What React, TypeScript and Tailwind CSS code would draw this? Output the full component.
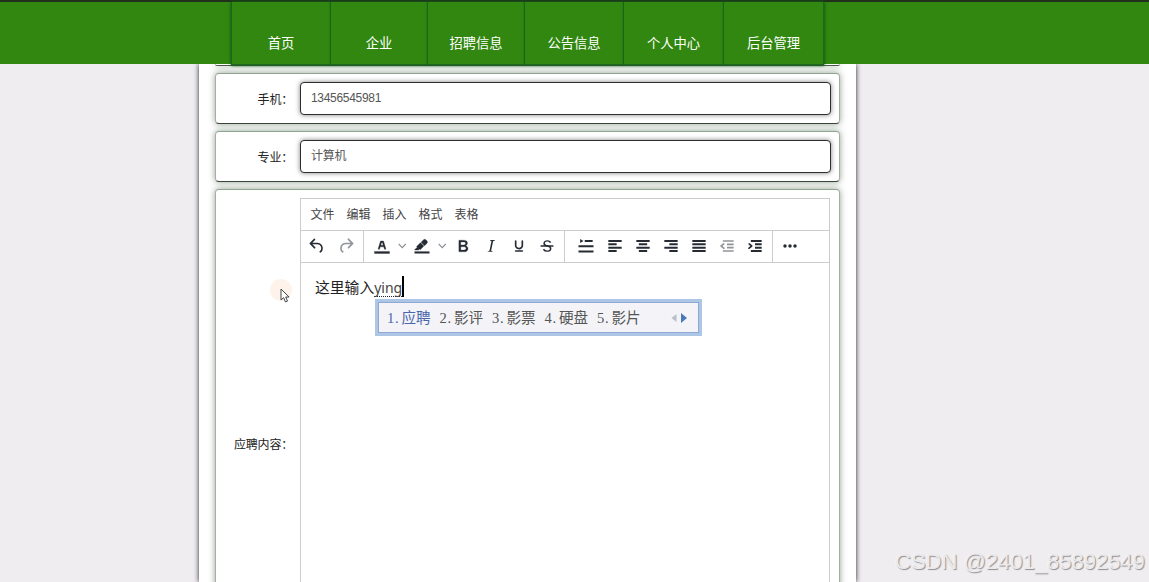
import type { ReactNode } from "react";

const NAV = [
  { label: "首页", width: "w-[99px]" },
  { label: "企业", width: "w-[97px]" },
  { label: "招聘信息", width: "w-[97px]" },
  { label: "公告信息", width: "w-[99px]" },
  { label: "个人中心", width: "w-[100px]" },
  { label: "后台管理", width: "w-[100px]" },
];

const MENUS = ["文件", "编辑", "插入", "格式", "表格"];
const CANDIDATES = ["应聘", "影评", "影票", "硬盘", "影片"];

export default function App() {
  return (
    <div className="relative flex h-[582px] w-[1149px] flex-col overflow-hidden bg-[#efedf0] font-['Liberation_Sans','Noto_Sans_CJK_SC',sans-serif] text-[#333]">
      <header className="z-10 flex h-16 shrink-0 border-t-2 border-[#20301a] bg-[#31870f] pl-[231px]">
        <nav className="flex h-[63px] border-l border-[#1c6d1c] shadow-[0_0_3px_#145c18]">
          {NAV.map((item) => (
            <a
              key={item.label}
              className={`${item.width} flex items-center justify-center border-r border-b border-[#1c6a1b] bg-[#31870f] pt-[21px] text-[13.3px] leading-5 text-white shadow-[0_0_3px_#145c18]`}
            >
              {item.label}
            </a>
          ))}
        </nav>
      </header>

      <main className="ml-[199px] flex h-[518px] w-[657px] shrink-0 flex-col gap-[7px] bg-white px-4 shadow-[0_0_5px_#222]">
        <div className="h-[2px] shrink-0 rounded-b border-b border-[#4b5b4b] bg-white shadow-[0_0_6px_#23482390]" />
        <Card className="h-[51px]">
          <Field label="手机：" value="13456545981" />
        </Card>
        <Card className="h-[51px]">
          <Field label="专业：" value="计算机" />
        </Card>
        <Card className="h-[520px] shrink-0">
          <Label className="pb-[11px]">应聘内容：</Label>
          <Editor />
        </Card>
      </main>

      <Pointer />
      <div className="absolute top-[550px] left-[895px] text-[22px] leading-6 whitespace-nowrap text-[#ebe9ec] [text-shadow:1px_1px_1px_#8f8f8f,-0.5px_-0.5px_0_#fff]">
        CSDN @2401_85892549
      </div>
    </div>
  );
}

function Card({ className, children }: { className: string; children: ReactNode }) {
  return (
    <section
      className={`${className} flex shrink-0 items-center rounded border border-x-[#aaa] border-t-[#93a393] border-b-[#3d443d] bg-white shadow-[0_0_6px_#23482380]`}
    >
      {children}
    </section>
  );
}

function Label({ className, children }: { className?: string; children: ReactNode }) {
  return (
    <span
      className={`w-[77px] pl-[5px] text-right font-['Noto_Sans_CJK_SC',sans-serif] text-xs tracking-[-0.2px] text-[#222] ${className ?? ""}`}
    >
      {children}
    </span>
  );
}

function Field({ label, value }: { label: string; value: string }) {
  return (
    <>
      <Label>{label}</Label>
      <div className="mb-px ml-[7px] flex h-[33px] w-[531px] items-center rounded border border-[#2b2f31] bg-white px-[10px] text-xs tracking-[-0.3px] text-[#555] shadow-[0_0_5px_#00000080]">
        {value}
      </div>
    </>
  );
}

function Editor() {
  return (
    <div className="mt-4 ml-[7px] flex h-full w-[530px] flex-col border border-[#ccc] bg-white">
      <div className="flex h-8 shrink-0 items-center gap-3 border-b border-[#ccc] pt-px pl-[9.5px] text-xs text-[#444]">
        {MENUS.map((menu) => (
          <span key={menu}>{menu}</span>
        ))}
      </div>
      <Toolbar />
      <div className="relative flex pt-[13px] pl-[14px] text-[15px] leading-6 whitespace-nowrap text-[#222]">
        <span className="text-[14.8px]">这里输入</span>
        <span className="h-[21px] border-r-2 border-black">
          <span className="block h-[21px] w-[28px] border-b border-dotted border-[#223] font-['Noto_Sans',sans-serif] text-[14px] leading-6 text-[#444]">
            ying
          </span>
        </span>
        <CandidateBox />
      </div>
    </div>
  );
}

function CandidateBox() {
  return (
    <div className="absolute top-[36px] left-[74px] flex h-[37px] w-[327px] items-center border-[3px] border-[#aec6e6] bg-[#f4f4f8] pl-[9px] font-['Liberation_Serif','Noto_Sans_CJK_SC',serif] text-[14.6px] leading-5 text-[#555] ring-1 ring-[#8eaad2] ring-inset">
      {CANDIDATES.map((word, i) => (
        <span
          key={word}
          className={i === 0 ? "flex w-[52.5px] shrink-0 text-[#4a67ac]" : "flex w-[52.5px] shrink-0"}
        >
          <span className="w-2">{i + 1}</span>
          <span className="w-[6.5px]">.</span>
          <span>{word}</span>
        </span>
      ))}
      <svg viewBox="0 0 16 10" className="ml-[21px] h-[10px] w-4">
        <path d="M5.5 1v8L.5 5z" fill="#b9bfc8" />
        <path d="M10 0v10l6-5z" fill="#4c78b8" />
      </svg>
    </div>
  );
}

function Toolbar() {
  return (
    <div className="flex h-8 shrink-0 border-b border-[#ccc] text-[#262b33]">
      <div className="flex w-[63px] items-center gap-px border-r border-[#ccc] pb-px pl-[2px]">
        <Icon>
          <path d="M6.4 8H12c3.7 0 6.2 2 6.8 5.1.6 2.7-.4 5.6-2.3 6.8a1 1 0 0 1-1-1.8c1.1-.6 1.8-2.7 1.4-4.6-.5-2.1-2.1-3.5-4.9-3.5H6.4l3.3 3.3a1 1 0 1 1-1.4 1.4l-5-5a1 1 0 0 1 0-1.4l5-5a1 1 0 0 1 1.4 1.4L6.4 8Z" />
        </Icon>
        <Icon dim>
          <path d="M17.6 10H12c-2.8 0-4.4 1.4-4.9 3.5-.4 2 .3 4 1.4 4.6a1 1 0 1 1-1 1.8c-2-1.2-2.9-4.1-2.3-6.8.6-3 3-5.1 6.8-5.1h5.6l-3.3-3.3a1 1 0 1 1 1.4-1.4l5 5a1 1 0 0 1 0 1.4l-5 5a1 1 0 0 1-1.4-1.4l3.3-3.3Z" />
        </Icon>
      </div>
      <div className="flex w-[201px] items-center border-r border-[#ccc] pb-px pl-[3.5px]">
        <Icon>
          <path d="M3 18.5h18V21H3zM8.7 16h-.8a.5.5 0 0 1-.5-.6l2.7-9c.1-.3.3-.4.5-.4h2.8c.2 0 .4.1.5.4l2.7 9a.5.5 0 0 1-.5.6h-.8a.5.5 0 0 1-.4-.4l-.7-2.2c0-.3-.3-.4-.5-.4h-3.4c-.2 0-.4.1-.5.4l-.7 2.2c0 .3-.2.4-.4.4Zm2.6-7.6-.6 2a.5.5 0 0 0 .5.6h1.6a.5.5 0 0 0 .5-.6l-.6-2c0-.3-.3-.4-.5-.4h-.4c-.2 0-.4.1-.5.4Z" stroke="currentColor" strokeWidth=".4" />
        </Icon>
        <Chevron />
        <Icon>
          <path d="M3 18.5h18V21H3z" />
          <path d="M7.7 16.7H3l3.3-3.3-.7-.8L10.2 8l4 4.1-4 4.2c-.2.2-.6.2-.8 0l-.6-.7-1.1 1.1zm5-7.5L11 7.4l3-2.9a2 2 0 0 1 2.6 0L18 6c.7.7.7 2 0 2.7l-2.9 2.9-1.8-1.8-.5-.6" stroke="currentColor" strokeWidth=".5" />
        </Icon>
        <Chevron />
        <Icon>
          <path d="M7.8 19c-.3 0-.5 0-.6-.2l-.2-.5V5.7c0-.2 0-.4.2-.5l.6-.2h5c1.5 0 2.7.3 3.5 1 .7.6 1.1 1.4 1.1 2.5a3 3 0 0 1-.6 1.9c-.4.6-1 1-1.6 1.2.4.1.9.3 1.3.6s.8.7 1 1.2c.4.4.5 1 .5 1.6 0 1.3-.4 2.3-1.3 3-.8.7-2.1 1-3.8 1H7.8Zm5-8.3c.6 0 1.2-.1 1.6-.5.4-.3.6-.7.6-1.3 0-1.1-.8-1.7-2.3-1.7H9.3v3.5h3.4Zm.5 6c.7 0 1.3-.1 1.7-.4.4-.4.6-.9.6-1.5s-.2-1-.7-1.4c-.4-.3-1-.4-2-.4H9.4v3.8h4Z" stroke="currentColor" strokeWidth=".3" />
        </Icon>
        <Icon>
          <path d="m16.7 4.7-.1.9h-.3c-.6 0-1 0-1.4.3-.3.3-.4.6-.5 1.1l-2.1 9.8v.6c0 .5.4.8 1.4.8h.2l-.2.8H8l.2-.8h.2c1.1 0 1.8-.5 2-1.5l2-9.8.1-.5c0-.6-.4-.8-1.4-.8h-.3l.2-.9h5.8Z" />
        </Icon>
        <Icon>
          <path d="M16 5c.6 0 1 .4 1 1v5.5a4 4 0 0 1-.4 1.8l-1 1.4a5.3 5.3 0 0 1-5.5 1 5 5 0 0 1-1.6-1c-.5-.4-.8-.9-1.1-1.4a4 4 0 0 1-.4-1.8V6c0-.6.4-1 1-1s1 .4 1 1v5.5c0 .3 0 .6.2 1l.6.7a3.3 3.3 0 0 0 2.2.8 3.4 3.4 0 0 0 2.2-.8c.3-.2.4-.5.6-.8l.2-.9V6c0-.6.4-1 1-1ZM8 17h8c.6 0 1 .4 1 1s-.4 1-1 1H8a1 1 0 0 1 0-2Z" />
        </Icon>
        <Icon>
          <path d="M15.6 8.5c-.5-.7-1-1.1-1.3-1.3-.6-.4-1.3-.6-2-.6-2.7 0-2.8 1.7-2.8 2.1 0 1.6 1.8 2 3.2 2.3 4.4.9 4.6 2.8 4.6 3.9 0 1.4-.7 4.1-5 4.1A6.2 6.2 0 0 1 7 16.4l1.5-1.1c.4.6 1.6 2 3.7 2 1.6 0 2.5-.4 3-1.2.4-.8.3-2-.8-2.6-.7-.4-1.6-.7-2.9-1-1-.2-3.9-.8-3.9-3.6C7.6 6 10.3 5 12.4 5c2.9 0 4.2 1.6 4.7 2.4l-1.5 1.1Z" />
          <path d="M5 11h14a1 1 0 0 1 0 2H5a1 1 0 0 1 0-2Z" />
        </Icon>
      </div>
      <div className="flex w-[208px] items-center border-r border-[#ccc] pb-px pl-[6.5px]">
        <Icon>
          <path d="M5 3.5 9 6 5 8.5zM10.5 4.8H20v2.4h-9.5zM3 11h18v2.4H3zM3 17.4h18v2.4H3z" />
        </Icon>
        <div className="w-px" />
        <Icon>
          <path d="M4 4.8h16v2.4H4zM4 8.8h10v2.4H4zM4 12.8h16v2.4H4zM4 16.8h10v2.4H4z" />
        </Icon>
        <Icon>
          <path d="M4 4.8h16v2.4H4zM7 8.8h10v2.4H7zM4 12.8h16v2.4H4zM7 16.8h10v2.4H7z" />
        </Icon>
        <Icon>
          <path d="M4 4.8h16v2.4H4zM10 8.8h10v2.4H10zM4 12.8h16v2.4H4zM10 16.8h10v2.4H10z" />
        </Icon>
        <Icon>
          <path d="M4 4.8h16v2.4H4zM4 8.8h16v2.4H4zM4 12.8h16v2.4H4zM4 16.8h16v2.4H4z" />
        </Icon>
        <Icon dim>
          <path d="M7 5h13v2H7zM12 9h8v2h-8zM12 13h8v2h-8zM7 17h13v2H7zM8.6 13.8a1 1 0 1 1-1.2 1.5l-3-2.5a1 1 0 0 1 0-1.6l3-2.5a1 1 0 0 1 1.2 1.6L6.5 12l2 1.8Z" />
        </Icon>
        <Icon>
          <path d="M7 4.8h13v2.4H7zM12 8.8h8v2.4h-8zM12 12.8h8v2.4h-8zM7 16.8h13v2.4H7zM4.4 13.8 6.4 12l-2-1.7a1 1 0 1 1 1.2-1.6l3 2.5a1 1 0 0 1 0 1.6l-3 2.5a1 1 0 1 1-1.2-1.5Z" />
        </Icon>
      </div>
      <div className="flex items-center pb-px pl-[2.5px]">
        <Icon>
          <circle cx="6" cy="12" r="2.1" />
          <circle cx="12" cy="12" r="2.1" />
          <circle cx="18" cy="12" r="2.1" />
        </Icon>
      </div>
    </div>
  );
}

function Icon({ dim, children }: { dim?: boolean; children: ReactNode }) {
  return (
    <span className={dim ? "flex w-7 justify-center opacity-50" : "flex w-7 justify-center"}>
      <svg viewBox="0 0 24 24" className="h-5 w-5" fill="currentColor">
        {children}
      </svg>
    </span>
  );
}

function Chevron() {
  return (
    <svg viewBox="0 0 12 10" className="h-[10px] w-[12.5px]" fill="none">
      <path d="M2.5 3 6 6.7 9.5 3" stroke="#8a9097" strokeWidth="1.1" />
    </svg>
  );
}

/** Mouse cursor with the soft highlight behind it. */
function Pointer() {
  return (
    <div className="absolute top-[279px] left-[270px] h-[22px] w-[22px] rounded-full bg-[#fef3ea]">
      <svg viewBox="0 0 12 16" className="absolute top-[9px] left-[10px] h-4 w-3">
        <path d="M1 1v11l2.6-2.3 1.9 4.3 2-.9-1.8-4.1h3.4z" fill="#fff" stroke="#444" strokeWidth="1" />
      </svg>
    </div>
  );
}
